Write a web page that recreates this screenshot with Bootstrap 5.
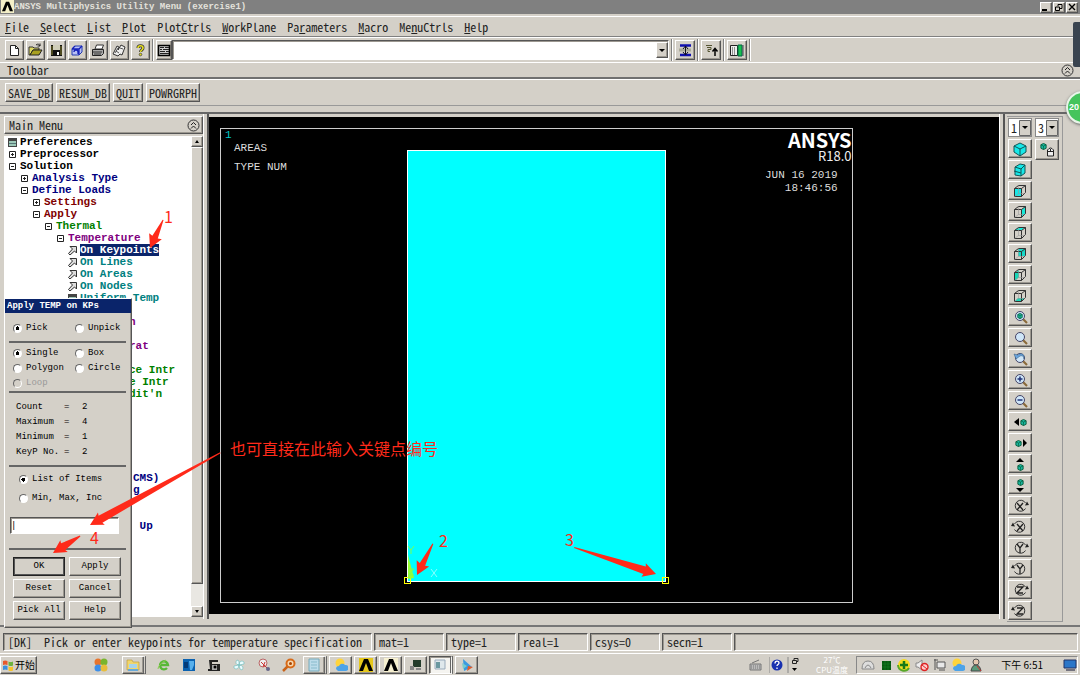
<!DOCTYPE html>
<html lang="en">
<head>
<meta charset="utf-8">
<meta name="viewport" content="width=device-width, initial-scale=1">
<title>ANSYS Multiphysics Utility Menu (exercise1)</title>
<link rel="stylesheet" href="https://cdn.jsdelivr.net/npm/bootstrap@5.3.0/dist/css/bootstrap.min.css">
<style>
:root{--face:#d4d0c8;--mono:"Liberation Mono","Noto Sans CJK SC",monospace;--ui:"Noto Sans Mono CJK SC","Liberation Mono",monospace}
body{background:var(--face);color:#222;font:12px/16px var(--ui);overflow:hidden}
button,input,select{font:inherit;color:inherit;margin:0;padding:0;border-radius:0}
svg{display:block;flex:none}
a{color:inherit;text-decoration:none}
.raised{background:var(--face);border:1px solid;border-color:#fff #555 #555 #fff;box-shadow:inset -1px -1px #9c9890}
.sunk{border:1px solid;border-color:#555 #fff #fff #555;box-shadow:inset 1px 1px #9c9890}
.app-title{background:#808080;color:#e4e2dc;font:bold 9px/14px var(--mono);height:14px}
.app-title .win-btns{gap:1px;padding-right:2px}
.win-btn{width:12px;height:11px}
.menu-row{height:21px;margin-top:2px;border-top:1px solid #fff;border-bottom:1px solid #808080;gap:11px;padding-left:5px}
.icon-row{height:25px;gap:2px;padding-left:5px;border-top:1px solid #fff}
.tool-btn{width:19px;height:20px}
.list-btn{width:16px;height:20px}
.tool-wide{width:20px;height:20px}
.divide{width:2px;height:22px;border-left:1px solid #808080;border-right:1px solid #fff}
.cmd-box{width:497px;height:20px;background:#fff}
.cmd-box input{border:0;outline:0;background:transparent}
.drop-btn{width:12px;height:16px}
.bar-label{height:17px;padding:0 6px 0 7px;border-top:1px solid #fff;border-bottom:2px solid #707070}
.abbr-row{height:27px;gap:3px;padding-left:5px;border-top:1px solid #fff;border-bottom:1px solid #999}
.abbr-row button{height:19px;padding:0 2px;line-height:16px}
.body-row{margin-top:6px;border-top:2px solid #666;min-height:0}
.side{width:203px;padding:2px 0 2px 4px}
.side-head{height:18px;padding:0 2px 0 4px}
.tree-box{background:#fff;margin-top:2px;min-height:0}
.tree{font:bold 11px/12px var(--mono);padding:0 0 0 4px;white-space:nowrap;overflow:hidden;color:#000}
.tree a{display:flex;align-items:center;height:12px;gap:3px}
.tree svg{width:9px;height:9px}
.l1{padding-left:12px;color:#000080}.l2{padding-left:24px;color:#800000}.l3{padding-left:36px;color:#008000}
.l4{padding-left:48px;color:#800080}.l5{padding-left:60px;color:#008080}
.tree .tail{margin-left:121px;padding-left:0}
.tree .tail.l1{margin-left:125px}
.tree .run-1{margin-top:12px}
.tree .run-6{margin-top:72px}
.tree .run-2{margin-top:24px}
.picked{background:#0a246a;color:#fff;line-height:12px}
.vscroll{width:12px;background:#e9e7e2}
.vscroll button{height:11px;width:12px}
.thumb{height:437px}
.split-v{width:6px;border-left:1px solid #fff;border-right:2px solid #555}
.plot{background:#000;color:#ddd;font:11px/13px var(--mono);margin:3px 0 5px;overflow:hidden}
.plot>*{position:absolute}
.plot-frame{left:11px;top:11px;width:633px;height:475px;border:1px solid #ccc}
.plot-area{left:198px;top:33px;width:259px;height:432px;background:#0ff;border:1px solid #fff}
.kp{width:7px;height:7px;border:1px solid #ff0}
.logo-a{font:bold 20px/18px "Noto Sans CJK SC",sans-serif;color:#fff}
.logo-b{font:13px/14px "Noto Sans CJK SC",sans-serif;color:#eee}
.view-col{width:75px;padding:2px 0 0 2px}
.view-box{width:56px;border:1px solid #999;border-left:0;padding:1px;gap:3px}
.view-box button{width:24px;height:19px}
.view-box .mouse-btn{height:21px}
.view-box select{width:24px;height:19px;appearance:none;background:#fff url("data:image/svg+xml,%3Csvg xmlns='http://www.w3.org/2000/svg' width='12' height='16'%3E%3Cpath fill='%23d4d0c8' stroke='%23666' d='M.5.5h11v15H.5z'/%3E%3Cpath d='M3 6h6L6 9z'/%3E%3C/svg%3E") right center no-repeat;border:1px solid #888;padding-left:2px}
.status{height:26px;border-top:2px solid #777;margin-top:6px;padding:6px 2px 0 3px;gap:2px}
.status>div{height:18px;padding-left:4px;line-height:16px;white-space:pre}
.s-prompt{width:369px}.s-cell{width:70px}
.taskbar{height:22px;border-top:1px solid #fff;margin-top:2px}
.task{width:23px;height:18px}
.task.flat{background:none;border:0}
.task.on{background:#f5f4f0}
.stack{width:24px;height:18px;border-right:3px double #666}
.start{width:37px;height:18px;font:10px/14px "Noto Sans CJK SC",sans-serif;color:#000}
.tray{width:222px;height:18px;margin:0 2px 0 4px;border:1px solid;border-color:#888 #fff #fff #888;font:10px/16px "Noto Sans CJK SC",sans-serif;color:#000}
.cpu{font:8px/10px "Noto Sans CJK SC",sans-serif;color:#fff;width:36px;margin-left:12px}
.picker{left:4px;top:298px;width:128px;height:330px;font:9px/11px var(--mono);color:#000;z-index:3}
.picker-title{background:#0a246a;color:#fff;font-weight:bold;line-height:14px;padding-left:2px}
.picker hr{margin:0;opacity:1;border-top:2px solid #666}
.rad{display:flex;align-items:center;gap:4px;height:15px}
.rad input{appearance:none;width:9px;height:9px;flex:none;border:1px solid;border-color:#666 #fff #fff #666;border-radius:50%;background:#fff}
.rad input:checked{background:radial-gradient(circle,#000 0 2px,#fff 2px)}
.rad input:disabled{background:var(--face)}
.pair{display:grid;grid-template-columns:62px 1fr}
.facts{display:grid;grid-template-columns:48px 18px 1fr;line-height:15px;padding:7px 0 5px 7px}
.modes{padding:5px 0 0 10px}
.modes .rad{margin-bottom:4px}
.picker .entry{width:109px;height:17px;background:#fff;margin:7px 0 0 1px}
.keys{display:grid;grid-template-columns:52px 52px;gap:3px 4px;padding-left:4px}
.keys button{height:19px}
.keys .main-key{border:1px solid #222;outline:1px solid #555;outline-offset:-2px}
.note{color:#ff2a1a;font:16px/20px "Noto Sans CJK SC",sans-serif;z-index:4}
.arrows{z-index:4;pointer-events:none;fill:#ff2a1a}
.edge-tab{right:0;top:22px;width:7px;height:45px;background:#3a4450;border-radius:2px 0 0 2px;z-index:5}
.ball{right:-19px;top:91px;width:33px;height:33px;border-radius:50%;background:#45c45c;border:2px solid #e8f5e8;box-shadow:0 1px 3px #666;color:#fff;font:bold 9px/29px "Liberation Sans",sans-serif;padding-left:1px;z-index:5}
</style>
</head>
<body>
<svg width="0" height="0" class="position-absolute" aria-hidden="true">
<defs>
<symbol id="plus" viewBox="0 0 9 9"><path d="M1.500 1.500h6v6h-6zM3 4.500h3M4.500 3v3" fill="none" stroke="#222"/></symbol>
<symbol id="minus" viewBox="0 0 9 9"><path d="M1.500 1.500h6v6h-6zM3 4.500h3" fill="none" stroke="#222"/></symbol>
<symbol id="form" viewBox="0 0 9 9"><path d="M0 0h9v9H0z" fill="#444"/><path d="M1 3h7v5H1z" fill="#9cc8b8"/><path d="M1 5.500h7" stroke="#577"/></symbol>
<symbol id="pickarrow" viewBox="0 0 9 9"><path d="M2 .5h6.500V7L6.500 5 2 9 .5 7.500 4.500 3z" fill="#ddd" stroke="#333"/></symbol>
<symbol id="cube" viewBox="0 0 14 14"><path d="M1.500 4.500h7v8h-7zM1.500 4.500l4-3h7v7l-4 4M8.500 4.500l4-3" fill="none" stroke="#333"/><path d="M5.500 2v7.500h6M5.500 9.500l-4 3" fill="none" stroke="#999" stroke-width=".6"/></symbol>
<symbol id="mini" viewBox="0 0 8 8"><path d="M1 2l3-1.500L7 2v4L4 7.500 1 6z" fill="#1ab8a0" stroke="#053"/><path d="M1 2l3 1.500L7 2M4 3.500v4" stroke="#053" fill="none" stroke-width=".7"/></symbol>
<symbol id="lens" viewBox="0 0 14 14"><path d="M9 9l4 4" stroke="#8a6a3a" stroke-width="2.200"/><circle cx="6" cy="6" r="4.500" fill="#cfe6f8" stroke="#446"/></symbol>
<symbol id="spin" viewBox="0 0 16 14"><path d="M12.500 9.500A5.500 5.500 0 1 1 12.500 4" fill="none" stroke="#333"/><path d="M12 6.500l4-.5-2-3.500z" fill="#222"/></symbol>
<symbol id="chev" viewBox="0 0 13 13"><circle cx="6.500" cy="6.500" r="5.500" fill="none" stroke="#333"/><path d="M4 6l2.500-2.500L9 6M4 9.500L6.500 7 9 9.500" fill="none" stroke="#222"/></symbol>
<symbol id="lam" viewBox="0 0 14 14"><path d="M0 13L5 1h4l5 12h-4L7 5l-3 8z"/></symbol>
<symbol id="folder" viewBox="0 0 14 14"><path d="M1 2h5l1 2h6v8H1z" fill="#f1d66d" stroke="#b99530" stroke-width=".6"/><path d="M3 6h8v4H3z" fill="#a6d3ec"/><path d="M2 11h10v2H2z" fill="#68a9d8"/></symbol>
<symbol id="weather" viewBox="0 0 14 14"><circle cx="6" cy="5" r="4.500" fill="#ffd43c"/><path d="M2 11a3 3 0 0 1 3-3 3.500 3.500 0 0 1 6-1 3 3 0 0 1 1 6H4z" fill="#4da3e8"/></symbol>
</defs>
</svg>
<div class="position-relative d-flex flex-column vh-100 overflow-hidden">
<header class="app-title d-flex align-items-center flex-shrink-0">
<svg width="14" height="14" viewBox="0 0 14 14"><path d="M1 0h13v13H1z" fill="#f4efc8"/><use href="#lam" x="2" y="1" width="11" height="11"/></svg>
<span class="text-nowrap">ANSYS Multiphysics Utility Menu (exercise1)</span>
<div class="win-btns ms-auto d-flex text-dark">
<button class="raised win-btn" aria-label="Minimize"><svg width="9" height="9"><path d="M1 7h5" stroke="#000" stroke-width="2"/></svg></button>
<button class="raised win-btn" aria-label="Restore"><svg width="10" height="9"><path d="M4 3V1.500h4v4H6M1.500 4h4v3.500h-4z" fill="none" stroke="#000"/></svg></button>
<button class="raised win-btn" aria-label="Close"><svg width="10" height="9"><path d="M2 1l6 6M8 1L2 7" stroke="#000" stroke-width="1.400"/></svg></button>
</div>
</header>
<nav class="menu-row d-flex align-items-center flex-shrink-0">
<a href="#"><u>F</u>ile</a><a href="#"><u>S</u>elect</a><a href="#"><u>L</u>ist</a><a href="#"><u>P</u>lot</a><a href="#">Plot<u>C</u>trls</a><a href="#"><u>W</u>orkPlane</a><a href="#">Pa<u>r</u>ameters</a><a href="#"><u>M</u>acro</a><a href="#">Me<u>n</u>uCtrls</a><a href="#"><u>H</u>elp</a>
</nav>
<div class="icon-row d-flex align-items-center flex-shrink-0">
<button class="raised tool-btn" aria-label="New"><svg width="16" height="16"><path d="M4.500 3.500h5l3 3v7h-8z" fill="#fff" stroke="#222"/><path d="M9.500 3.500v3h3" fill="none" stroke="#222"/></svg></button>
<button class="raised tool-btn" aria-label="Open"><svg width="16" height="16"><path d="M2 5h4l1 1h5v2H6l-3 5H2z" fill="#dcd860" stroke="#333"/><path d="M6 8h9l-3 5H3z" fill="#a8a020" stroke="#222"/><path d="M9 3c2-1.500 3-1 4 1M13 1.500V4h-2.500" fill="none" stroke="#222"/></svg></button>
<button class="raised tool-btn" aria-label="Save"><svg width="16" height="16"><path d="M3 3h11v11H3z" fill="#111"/><path d="M5 3h7v5H5z" fill="#cfcdb8"/><path d="M4 4v9M13 4v9" stroke="#8a8430"/><path d="M9 10h2v3H9z" fill="#fff"/></svg></button>
<button class="raised tool-btn" aria-label="Plot windows"><svg width="16" height="16"><path d="M3 7l3-3h7v6l-3 3H3z" fill="#b7bff5" stroke="#223ab0"/><path d="M3 7h7v6M10 7l3-3M5 10a2 2 0 0 1 4 0v2M6 4l-3 3" fill="none" stroke="#1520b8" stroke-width="1.300"/></svg></button>
<button class="raised tool-btn" aria-label="Print"><svg width="16" height="16"><path d="M5 7l1.500-4h7L12 7z" fill="#fff" stroke="#333"/><path d="M2.500 7.500h11v4l-2 2h-9z" fill="#aaa" stroke="#222"/><path d="M3 10h9M4 12h7" stroke="#333"/></svg></button>
<button class="raised tool-btn" aria-label="Report"><svg width="16" height="16"><path d="M2 12l4-8 2 1-1 3 3-5 4 2-3 8-2-1-2 2z" fill="#eee" stroke="#333"/><path d="M5 9l3 2M9 6l3 1M4 11l3-5" stroke="#555"/></svg></button>
<button class="raised tool-btn" aria-label="Help"><svg width="16" height="16"><path d="M6 6c0-3 5-3 5 0 0 2-2.500 2-2.500 4" fill="none" stroke="#333" stroke-width="3"/><path d="M6 6c0-3 5-3 5 0 0 2-2.500 2-2.500 4" fill="none" stroke="#e8e020" stroke-width="1.600"/><circle cx="8.500" cy="12.500" r="1.300" fill="#e0d820" stroke="#333" stroke-width=".7"/></svg></button>
<span class="divide"></span>
<div class="d-flex align-items-center">
<button class="raised list-btn" aria-label="Command list"><svg width="14" height="16"><path d="M1.500 3.500h11v10h-11z" fill="#ccc" stroke="#000" stroke-width="1.600"/><path d="M3 5.500h4M8 5.500h4M3 7.500h2M6 7.500h6M3 9.500h5M9 9.500h3M3 11.500h9" stroke="#222"/></svg></button>
<div class="cmd-box sunk d-flex align-items-center"><input class="flex-grow-1" type="text" aria-label="Command"><button class="raised drop-btn" aria-label="History"><svg width="10" height="12"><path d="M2 5h6L5 8z"/></svg></button></div>
</div>
<span class="divide"></span>
<button class="raised tool-wide" aria-label="Raise hidden"><svg width="18" height="16"><path d="M4 3.500h11M4 13h11" stroke="#1010b0" stroke-width="2.500"/><path d="M3 8h12" stroke="#aa9" stroke-width="3"/><path d="M9.500 4v9M7 7l2.500-3L12 7M7 10l2.500 3 2.500-3" stroke="#112" fill="none"/></svg></button>
<span class="divide"></span>
<button class="raised tool-wide" aria-label="Reset picking"><svg width="18" height="16"><path d="M4 3.500h6M5 5.500h4v2H6v2h2" stroke="#553" fill="none"/><path d="M13 14V7M10.500 9.500L13 6.500l2.500 3" stroke="#000" stroke-width="1.500" fill="none"/></svg></button>
<span class="divide"></span>
<button class="raised tool-wide" aria-label="Contact manager"><svg width="18" height="16"><path d="M2.500 3.500h7v10h-7z" fill="#eee" stroke="#222"/><path d="M4 6h4M4 8h4M4 10h4M4 12h4" stroke="#333" stroke-dasharray="1 1"/><path d="M10 3h4v11h-4z" fill="#18c050" stroke="#064"/><path d="M15 3v11" stroke="#445"/></svg></button>
<span class="divide"></span>
</div>
<div class="bar-label d-flex align-items-center justify-content-between flex-shrink-0"><span>Toolbar</span><svg width="13" height="13"><use href="#chev"/></svg></div>
<div class="abbr-row d-flex align-items-center flex-shrink-0">
<button class="raised">SAVE_DB</button><button class="raised">RESUM_DB</button><button class="raised">QUIT</button><button class="raised">POWRGRPH</button>
</div>
<main class="body-row d-flex flex-grow-1">
<aside class="side d-flex flex-column">
<div class="side-head raised d-flex align-items-center justify-content-between flex-shrink-0"><span>Main Menu</span><svg width="13" height="13"><use href="#chev"/></svg></div>
<div class="tree-box d-flex flex-grow-1">
<nav class="tree flex-grow-1">
<a href="#"><svg><use href="#form"/></svg>Preferences</a>
<a href="#"><svg><use href="#plus"/></svg>Preprocessor</a>
<a href="#"><svg><use href="#minus"/></svg>Solution</a>
<a href="#" class="l1"><svg><use href="#plus"/></svg>Analysis Type</a>
<a href="#" class="l1"><svg><use href="#minus"/></svg>Define Loads</a>
<a href="#" class="l2"><svg><use href="#plus"/></svg>Settings</a>
<a href="#" class="l2"><svg><use href="#minus"/></svg>Apply</a>
<a href="#" class="l3"><svg><use href="#minus"/></svg>Thermal</a>
<a href="#" class="l4"><svg><use href="#minus"/></svg>Temperature</a>
<a href="#" class="l5"><svg><use href="#pickarrow"/></svg><span class="picked">On Keypoints</span></a>
<a href="#" class="l5"><svg><use href="#pickarrow"/></svg>On Lines</a>
<a href="#" class="l5"><svg><use href="#pickarrow"/></svg>On Areas</a>
<a href="#" class="l5"><svg><use href="#pickarrow"/></svg>On Nodes</a>
<a href="#" class="l5"><svg><use href="#form"/></svg>Uniform Temp</a>
<a href="#" class="l4 tail run-1">n</a>
<a href="#" class="l4 tail run-1">rat</a>
<a href="#" class="l3 tail run-1">ce Intr</a>
<a href="#" class="l3 tail">e Intr</a>
<a href="#" class="l3 tail">dit'n</a>
<a href="#" class="l1 tail run-6">CMS)</a>
<a href="#" class="l1 tail">g</a>
<a href="#" class="l1 tail run-2">&nbsp;Up</a>
</nav>
<div class="vscroll d-flex flex-column flex-shrink-0">
<button class="raised" aria-label="Scroll up"><svg width="10" height="9"><path d="M3 6h4L5 3z"/></svg></button>
<div class="thumb raised"></div>
<button class="raised mt-auto" aria-label="Scroll down"><svg width="10" height="9"><path d="M3 3h4L5 6z"/></svg></button>
</div>
</div>
</aside>
<div class="split-v"></div>
<section class="plot position-relative flex-grow-1">
<div class="plot-frame"></div>
<div class="plot-area"></div>
<span style="left:16px;top:12px;color:#0cc">1</span>
<span style="left:25px;top:25px">AREAS</span>
<span style="left:25px;top:44px">TYPE NUM</span>
<span class="logo-a" style="left:579px;top:14px">ANSYS</span>
<span class="logo-b" style="left:609px;top:32px">R18.0</span>
<span class="text-end" style="left:556px;top:52px">JUN 16 2019<br>18:46:56</span>
<span class="kp" style="left:195px;top:460px"></span>
<span class="kp" style="left:453px;top:460px"></span>
<svg style="left:194px;top:425px" width="46" height="40"><path d="M5 37V13l6 23z" fill="#9f3"/><path d="M5 4l3 4 3-4M8 8v4M6 27h5l-5 6h5" stroke="#7f5" fill="none"/><path d="M28 27l6 8M34 27l-6 8" stroke="#8ff"/></svg>
</section>
<div class="split-v"></div>
<aside class="view-col">
<div class="view-box d-flex align-items-start">
<div class="d-flex flex-column" style="gap:2px">
<select aria-label="Window"><option>1</option></select>
<button class="raised" aria-label="Isometric view"><svg width="22" height="16"><path d="M5 5l6-3 6 3v6l-6 4-6-4z" fill="#18e8e8" stroke="#155"/><path d="M5 5l6 3 6-3M11 8v7" fill="none" stroke="#155"/></svg></button>
<button class="raised" aria-label="Oblique view"><svg width="22" height="16"><path d="M6 5l5-3 5 1v8l-4 3-6-1z" fill="#18e8e8" stroke="#155"/><path d="M6 5l6 2 4-4M12 7v7M5 9l7 2" fill="none" stroke="#155"/></svg></button>
<button class="raised" aria-label="Front view"><svg width="22" height="16"><path d="M6 6h7v8H6z" fill="#18e8e8"/><use href="#cube" x="4" y="1" width="14" height="14"/></svg></button>
<button class="raised" aria-label="Right view"><svg width="22" height="16"><path d="M12 6l5-4v7l-5 5z" fill="#18e8d8"/><use href="#cube" x="4" y="1" width="14" height="14"/></svg></button>
<button class="raised" aria-label="Top view"><svg width="22" height="16"><path d="M6 5l4-3h6l-3 3z" fill="#18e8d8"/><use href="#cube" x="4" y="1" width="14" height="14"/></svg></button>
<button class="raised" aria-label="Back view"><svg width="22" height="16"><path d="M9 3h7v7H9z" fill="#18d8c8"/><use href="#cube" x="4" y="1" width="14" height="14"/></svg></button>
<button class="raised" aria-label="Left view"><svg width="22" height="16"><path d="M6 6l4-3v7l-4 4z" fill="#18d8b8"/><use href="#cube" x="4" y="1" width="14" height="14"/></svg></button>
<button class="raised" aria-label="Bottom view"><svg width="22" height="16"><path d="M6 13l3-3h7l-3 3z" fill="#18d8b8"/><use href="#cube" x="4" y="1" width="14" height="14"/></svg></button>
<button class="raised" aria-label="Fit view"><svg width="22" height="16"><use href="#lens" x="5" y="1" width="14" height="14"/><use href="#mini" x="8" y="4" width="6" height="6"/></svg></button>
<button class="raised" aria-label="Zoom"><svg width="22" height="16"><use href="#lens" x="5" y="1" width="14" height="14"/></svg></button>
<button class="raised" aria-label="Back up"><svg width="22" height="16"><use href="#lens" x="5" y="1" width="14" height="14"/><path d="M5 3l2 5 4-3c3-1 4 1 4 3 1-6-4-6-6-4z" fill="#6aa6de" stroke="#357" stroke-width=".5"/></svg></button>
<button class="raised" aria-label="Zoom in"><svg width="22" height="16"><use href="#lens" x="5" y="1" width="14" height="14"/><path d="M8.500 7h5M11 4.500v5" stroke="#237" stroke-width="1.500"/></svg></button>
<button class="raised" aria-label="Zoom out"><svg width="22" height="16"><use href="#lens" x="5" y="1" width="14" height="14"/><path d="M8.500 7h5" stroke="#237" stroke-width="1.500"/></svg></button>
<button class="raised" aria-label="Pan left"><svg width="22" height="16"><path d="M10 4v8L5 8z"/><use href="#mini" x="11" y="5" width="7" height="7"/></svg></button>
<button class="raised" aria-label="Pan right"><svg width="22" height="16"><path d="M14 4v8l4-4z"/><use href="#mini" x="6" y="5" width="7" height="7"/></svg></button>
<button class="raised" aria-label="Pan up"><svg width="22" height="16"><path d="M7 6h8l-4-4z"/><use href="#mini" x="8" y="8" width="7" height="7"/></svg></button>
<button class="raised" aria-label="Pan down"><svg width="22" height="16"><path d="M7 11h8l-4 4z"/><use href="#mini" x="8" y="2" width="7" height="7"/></svg></button>
<button class="raised" aria-label="Rotate +X"><svg width="22" height="16"><use href="#spin" x="4" y="1" width="16" height="14"/><path d="M8 5l6 7M14 5l-6 7" stroke="#222" stroke-width="1.300"/></svg></button>
<button class="raised" aria-label="Rotate -X"><svg width="22" height="16"><g transform="matrix(-1 0 0 1 22 0)"><use href="#spin" x="4" y="1" width="16" height="14"/></g><path d="M8 5l6 7M14 5l-6 7" stroke="#222" stroke-width="1.300"/></svg></button>
<button class="raised" aria-label="Rotate +Y"><svg width="22" height="16"><use href="#spin" x="4" y="1" width="16" height="14"/><path d="M8 4l3 4 3-4M11 8v5" fill="none" stroke="#222" stroke-width="1.300"/></svg></button>
<button class="raised" aria-label="Rotate -Y"><svg width="22" height="16"><g transform="matrix(-1 0 0 1 22 0)"><use href="#spin" x="4" y="1" width="16" height="14"/></g><path d="M8 4l3 4 3-4M11 8v5" fill="none" stroke="#222" stroke-width="1.300"/></svg></button>
<button class="raised" aria-label="Rotate +Z"><svg width="22" height="16"><use href="#spin" x="4" y="1" width="16" height="14"/><path d="M8 5h6l-6 6h6" fill="none" stroke="#222" stroke-width="1.300"/></svg></button>
<button class="raised" aria-label="Rotate -Z"><svg width="22" height="16"><g transform="matrix(-1 0 0 1 22 0)"><use href="#spin" x="4" y="1" width="16" height="14"/></g><path d="M8 5h6l-6 6h6" fill="none" stroke="#222" stroke-width="1.300"/></svg></button>
</div>
<div class="d-flex flex-column" style="gap:2px">
<select aria-label="Rate"><option>3</option></select>
<button class="raised mouse-btn" aria-label="Dynamic model mode"><svg width="22" height="18"><use href="#mini" x="4" y="2" width="7" height="7"/><path d="M11.500 9q3-4 6 0v6h-6zM11.500 10.500h6M14.500 8v2.500" fill="#eee" stroke="#222"/></svg></button>
</div>
</div>
</aside>
</main>
<footer class="status d-flex flex-shrink-0">
<div class="sunk s-prompt">[DK]  Pick or enter keypoints for temperature specification</div>
<div class="sunk s-cell">mat=1</div><div class="sunk s-cell">type=1</div><div class="sunk s-cell">real=1</div><div class="sunk s-cell">csys=0</div><div class="sunk s-cell">secn=1</div><div class="sunk flex-grow-1"></div>
</footer>
<div class="taskbar d-flex align-items-center flex-shrink-0">
<button class="raised start d-flex align-items-center justify-content-center" style="gap:1px"><svg width="12" height="12"><path d="M1 2q2-1 4.500 0v4Q3 5 1 6z" fill="#e8582c"/><path d="M6.500 2.500q2 1 4.500 0v4q-2.500 1-4.500 0z" fill="#6cb33e"/><path d="M1 7q2-1 4.500 0v4Q3 10 1 11z" fill="#3b8ede"/><path d="M6.500 7.500q2 1 4.500 0v4q-2.500 1-4.500 0z" fill="#f6c32c"/></svg>开始</button>
<div class="d-flex align-items-center" style="gap:2px;margin-left:52px">
<button class="task flat" aria-label="Apps"><svg class="mx-auto" width="14" height="14"><circle cx="4" cy="4" r="3.500" fill="#e8742c"/><circle cx="10" cy="4" r="3.500" fill="#79b52e"/><circle cx="4" cy="10" r="3.500" fill="#3d8ee8"/><circle cx="10" cy="10" r="3.500" fill="#e8bd3c"/></svg></button>
<button class="raised stack ms-2 me-0" aria-label="Explorer"><svg class="mx-auto" width="14" height="14"><use href="#folder"/></svg></button>
<button class="task flat ms-1" aria-label="Browser"><svg class="mx-auto" width="14" height="14"><path d="M3 7h8a4 4 0 1 0-1 3" fill="none" stroke="#58b838" stroke-width="2.400"/><path d="M1 11q0-4 8-9" stroke="#8ccc50" fill="none"/></svg></button>
<button class="task flat" aria-label="Outlook"><svg class="mx-auto" width="14" height="14"><path d="M1 1h12v12H1z" fill="#0b62b0"/><path d="M2 4h4v6H2z" fill="#053c78"/><path d="M7 3h5v4l-2 5H8z" fill="#58b0ec"/></svg></button>
<button class="task flat" aria-label="Recorder"><svg class="mx-auto" width="14" height="14"><path d="M2 2h9v2H5v2h8v7H1v-2h2z" fill="#222"/><path d="M5 7h5v5H5z" fill="#aaa"/><circle cx="8" cy="9" r="1.500"/></svg></button>
<button class="task flat" aria-label="Fan"><svg class="mx-auto" width="14" height="14"><path d="M7 7Q2 6 5 2l2 1zM7 7q1-6 5-3v2zM7 7q6 1 3 5l-2-1zM7 7q-1 6-5 3l0-2z" fill="#ecfcff" stroke="#6bb" stroke-width=".6"/></svg></button>
<button class="task flat" aria-label="Capture"><svg class="mx-auto" width="14" height="14"><circle cx="6" cy="5" r="4" fill="#eee" stroke="#b66"/><path d="M4 4l7 7M8 4l-2 5" stroke="#c33"/><circle cx="11" cy="11" r="2" fill="#668"/></svg></button>
<button class="task flat" aria-label="Search"><svg class="mx-auto" width="14" height="14"><path d="M6 8l-5 5" stroke="#c8641c" stroke-width="2.500"/><circle cx="8.500" cy="5.500" r="4" fill="#f7d8b0" stroke="#d86a18" stroke-width="2"/><circle cx="8.500" cy="5.500" r="1.500" fill="#a40"/></svg></button>
</div>
<div class="d-flex align-items-center" style="gap:2px;margin-left:3px">
<button class="raised stack" aria-label="Notes"><svg class="mx-auto" width="14" height="14"><path d="M2 1h10v12H2z" fill="#bcdcea" stroke="#7ab"/><path d="M4 4h6M4 7h6M4 10h6" stroke="#8bc"/></svg></button>
<button class="raised task" aria-label="Weather"><svg class="mx-auto" width="14" height="14"><use href="#weather"/></svg></button>
<button class="raised task" aria-label="ANSYS"><svg class="mx-auto" width="14" height="14"><path d="M0 0h14v14H0z" fill="#e6c81c"/><use href="#lam"/></svg></button>
<button class="raised task" aria-label="ANSYS output"><svg class="mx-auto" width="14" height="14"><path d="M0 0h14v14H0z" fill="#f6f0d0"/><use href="#lam"/></svg></button>
<button class="raised task" aria-label="Console"><svg class="mx-auto" width="14" height="14"><path d="M4 2h8v7H4z" fill="#243c2c"/><path d="M1 8h4v4H1zM7 10h5v2H7z" fill="#888"/></svg></button>
<button class="sunk stack task on" aria-label="Picker"><svg class="mx-auto" width="14" height="14"><path d="M2 2h10v9H2z" fill="#dfe8ec" stroke="#9ab"/><path d="M3 4h4v6H3z" fill="#6a98a0"/></svg></button>
<button class="raised task" aria-label="Media"><svg class="mx-auto" width="14" height="14"><path d="M3 1l9 8-8 4z" fill="#3b9ae0"/><path d="M8 8l5 1-6 4z" fill="#e05a28"/><path d="M2 5l5 3-4 3z" fill="#7cc"/></svg></button>
</div>
<div class="ms-auto d-flex align-items-center" style="gap:2px">
<svg class="me-1" width="14" height="14"><path d="M1 6h11v6H1zM3 5l7-3" fill="#bbb" stroke="#777"/><path d="M2 8h9M2 10h9" stroke="#777" stroke-dasharray="1 1"/></svg>
<svg width="16" height="16"><path d="M0 0v16" stroke="#888"/><circle cx="8" cy="8" r="5.500" fill="#1830b0"/><path d="M6 6.500c0-3 4-3 4-.5 0 1.500-2 1.500-2 3M8 10.500v1.500" fill="none" stroke="#fff" stroke-width="1.300"/></svg>
<svg width="13" height="16"><path d="M1 0v16" stroke="#888"/><path d="M7 3.500V1.500h4v3H9M5.500 3.500h4v3h-4z" fill="none" stroke="#222"/><path d="M5 11h5l-2.500 3z"/></svg>
<div class="cpu text-center text-nowrap">27℃<br>CPU温度</div>
<div class="tray d-flex align-items-center ps-1" style="gap:4px">
<svg width="14" height="14"><path d="M1 11q0-8 6-8t6 8z" fill="#ddd" stroke="#888"/><path d="M4 10q3-6 6 0" fill="none" stroke="#888"/></svg>
<svg width="14" height="14"><path d="M3 3h9v9H3z" fill="#075a10"/><path d="M6 3v9M9 3v9M3 6h9M3 9h9" stroke="#1b8a2a" stroke-width=".5"/></svg>
<svg width="14" height="14"><circle cx="7" cy="7" r="6" fill="#f5dc20"/><path d="M1 7a6 6 0 0 0 11 3" fill="none" stroke="#58a828" stroke-width="2"/><path d="M7 3v8M3 7h8" stroke="#187a18" stroke-width="2.500"/></svg>
<svg width="14" height="14"><path d="M1 5h2l4-3v10L3 9H1z" fill="#eee" stroke="#888"/><circle cx="9.500" cy="9" r="3.500" fill="#fcc" stroke="#d22" stroke-width="1.400"/><path d="M7 7l5 4" stroke="#d22"/></svg>
<svg width="14" height="14"><path d="M4 4h8v6H4zM6 12h6M2 1v11M1 2h4" fill="#e8e8e8" stroke="#555"/></svg>
<svg width="14" height="14"><use href="#weather"/></svg>
<svg width="14" height="14"><circle cx="7" cy="4" r="3" fill="#e6c8b0" stroke="#555"/><path d="M2 13q1-6 5-6t5 6z" fill="#5a9a7a" stroke="#444"/><path d="M8 8l4 5" stroke="#c33"/></svg>
<span class="ms-auto text-nowrap">下午 6:51</span>
<svg class="ms-3" width="14" height="14"><path d="M1 2h12v8H1z" fill="#2b76c8" stroke="#236"/><path d="M3 12h9" stroke="#556" stroke-width="1.500"/></svg>
</div>
</div>
</div>

<form class="picker raised position-absolute" onsubmit="return false">
<div class="picker-title">Apply TEMP on KPs</div>
<div style="padding:8px 5px 0 4px">
<div class="pair ps-1"><label class="rad"><input type="radio" name="op" checked>Pick</label><label class="rad"><input type="radio" name="op">Unpick</label></div>
<hr style="margin-top:5px">
<div class="pair ps-1" style="padding-top:3px"><label class="rad"><input type="radio" name="shape" checked>Single</label><label class="rad"><input type="radio" name="shape">Box</label><label class="rad"><input type="radio" name="shape">Polygon</label><label class="rad"><input type="radio" name="shape">Circle</label><label class="rad" style="color:#999"><input type="radio" name="shape" disabled>Loop</label></div>
<hr>
<div class="facts"><span>Count</span><span>=</span><span>2</span><span>Maximum</span><span>=</span><span>4</span><span>Minimum</span><span>=</span><span>1</span><span>KeyP No.</span><span>=</span><span>2</span></div>
<hr>
<div class="modes"><label class="rad"><input type="radio" name="mode" checked>List of Items</label><label class="rad"><input type="radio" name="mode">Min, Max, Inc</label></div>
<input class="entry sunk" type="text" aria-label="Keypoints" value="|">
<hr style="margin:14px 0 7px">
<div class="keys"><button class="raised main-key">OK</button><button class="raised">Apply</button><button class="raised">Reset</button><button class="raised">Cancel</button><button class="raised">Pick All</button><button class="raised">Help</button></div>
</div>
</form>

<svg class="arrows position-absolute top-0 start-0 w-100 h-100">
<path transform="translate(150 248) rotate(115)" d="M-31-.5L-12-3l-1-4L0 0l-13 7 1-4L-31 .5z"/>
<path transform="translate(417 575) rotate(117)" d="M-35-.5L-12-3l-1-4L0 0l-13 7 1-4L-35 .5z"/>
<path transform="translate(656 574) rotate(18)" d="M-86-.5L-12-4l-1-3L0 0l-13 7 1-3L-86 .5z"/>
<path transform="translate(90 525) rotate(151)" d="M-149-.5L-12-4l-1-3L0 0l-13 7 1-3L-149 .5z"/>
<path transform="translate(53 553) rotate(148)" d="M-32-.5L-12-4l-1-3L0 0l-13 7 1-3L-32 .5z"/>
</svg>
<span class="note position-absolute" style="left:164px;top:206px">1</span>
<span class="note position-absolute" style="left:439px;top:530px">2</span>
<span class="note position-absolute" style="left:565px;top:529px">3</span>
<span class="note position-absolute" style="left:90px;top:527px">4</span>
<span class="note position-absolute text-nowrap" style="left:230px;top:438px">也可直接在此输入关键点编号</span>
<div class="edge-tab position-absolute"></div>
<div class="ball position-absolute">20</div>
</div>
<script src="https://cdn.jsdelivr.net/npm/bootstrap@5.3.0/dist/js/bootstrap.bundle.min.js"></script>
</body>
</html>
